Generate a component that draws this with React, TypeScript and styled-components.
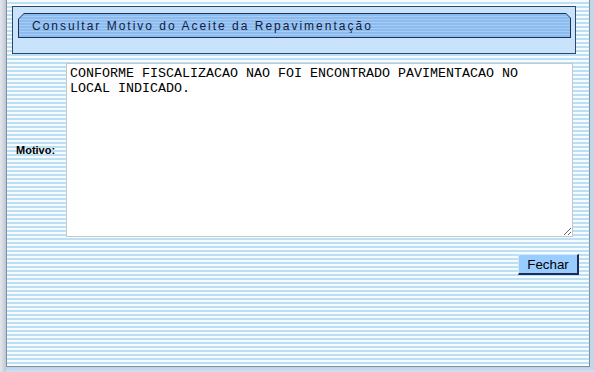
import React, { useEffect, useRef } from "react";
import styled, { createGlobalStyle } from "styled-components";

const GlobalStyle = createGlobalStyle`
  html, body {
    margin: 0;
    padding: 0;
    width: 594px;
    height: 372px;
    overflow: hidden;
    background: #c4d6ea;
    font-family: "Liberation Sans", Arial, sans-serif;
  }
`;

const Window = styled.div`
  box-sizing: border-box;
  width: 594px;
  height: 372px;
  padding: 0 4px 0 6px;
  background:
    linear-gradient(to right, #e3e7ec 0, #d2d9e1 3px, #bcc6d2 6px, transparent 6px),
    linear-gradient(to bottom, transparent 367px, #bcd2ea 367px, #cfdff0 372px);
`;

const Content = styled.div`
  box-sizing: border-box;
  width: 584px;
  height: 367px;
  border: 1px solid #868e98;
  border-top: none;
  padding: 6px 10px 0 5px;
  display: flex;
  flex-direction: column;
  background: repeating-linear-gradient(
    to bottom,
    #f6fbff 0,
    #f6fbff 2px,
    #bcdff3 2px,
    #bcdff3 4px
  );
`;

const Header = styled.div`
  box-sizing: border-box;
  height: 48px;
  margin-right: 3px;
  border: 1px solid #2d4967;
  background: #c8e3fb;
  padding: 6px 4px 0 5px;
`;

const TabFrame = styled.div`
  box-sizing: border-box;
  height: 25px;
  padding: 1px;
  background: #1e3350;
  clip-path: polygon(6px 0, calc(100% - 5px) 0, 100% 5px, 100% 100%, 0 100%, 0 6px);
`;

const TabFace = styled.div`
  height: 100%;
  display: flex;
  align-items: center;
  padding-left: 13px;
  clip-path: polygon(5px 0, calc(100% - 4px) 0, 100% 4px, 100% 100%, 0 100%, 0 5px);
  background: repeating-linear-gradient(
    to bottom,
    #8bbbef 0,
    #8bbbef 2px,
    #a6ccf5 2px,
    #a6ccf5 3px
  );
  font-family: "Liberation Sans", Arial, sans-serif;
  font-size: 12px;
  letter-spacing: 2px;
  color: #141c3c;
  white-space: nowrap;
`;

const FormRow = styled.div`
  display: flex;
  align-items: center;
  margin-top: 9px;
`;

const Label = styled.label`
  box-sizing: border-box;
  width: 54px;
  padding-left: 4px;
  font-family: "Liberation Sans", Arial, sans-serif;
  font-size: 11px;
  font-weight: bold;
  color: #000;
`;

const MotivoText = styled.textarea`
  box-sizing: border-box;
  width: 507px;
  height: 174px;
  margin: 0;
  padding: 2px 3px;
  border: 1px solid #c4c8cc;
  background: #fff;
  font-family: "Liberation Mono", "Courier New", monospace;
  font-size: 13.33px;
  color: #000;
  resize: both;
  outline: none;
`;

const ButtonRow = styled.div`
  display: flex;
  justify-content: flex-end;
  margin-top: 17px;
`;

const Button = styled.button`
  box-sizing: border-box;
  width: 61px;
  height: 21px;
  padding: 0;
  margin: 0;
  background: #99ccff;
  border-style: solid;
  border-width: 1px 2px 2px 1px;
  border-color: #cfe6ff #1b2c58 #1b2c58 #cfe6ff;
  font-family: "Liberation Sans", Arial, sans-serif;
  font-size: 13.33px;
  color: #000;
  cursor: pointer;
`;

const motivo =
  "CONFORME FISCALIZACAO NAO FOI ENCONTRADO PAVIMENTACAO NO\nLOCAL INDICADO.";

export default function App() {
  const ref = useRef<HTMLTextAreaElement>(null);
  useEffect(() => {
    if (ref.current) {
      ref.current.focus();
      ref.current.setSelectionRange(0, 0);
    }
  }, []);
  return (
    <>
      <GlobalStyle />
      <Window>
        <Content>
          <Header>
            <TabFrame>
              <TabFace>Consultar Motivo do Aceite da Repavimentação</TabFace>
            </TabFrame>
          </Header>
          <FormRow>
            <Label htmlFor="motivo">Motivo:</Label>
            <MotivoText id="motivo" ref={ref} defaultValue={motivo} readOnly />
          </FormRow>
          <ButtonRow>
            <Button type="button">Fechar</Button>
          </ButtonRow>
        </Content>
      </Window>
    </>
  );
}
